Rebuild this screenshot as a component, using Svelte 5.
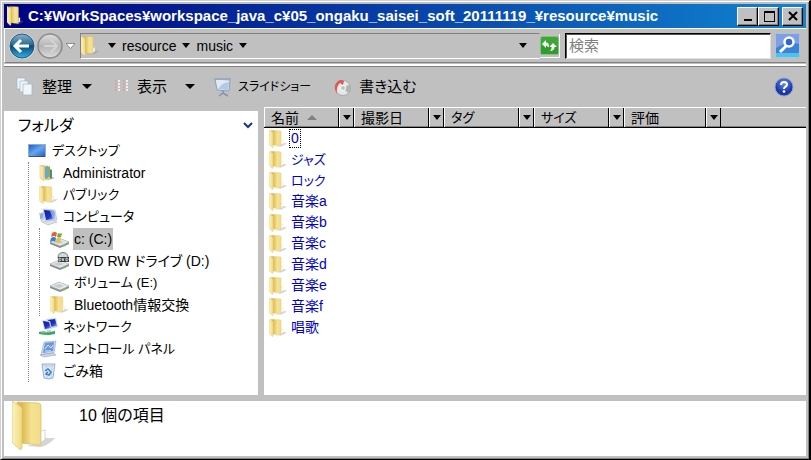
<script lang="ts">
	type Node = { icon: string; label: string; selected?: boolean; children?: Node[] };

	const path = ["resource", "music"];

	const tree: Node[] = [
		{ icon: "user", label: "Administrator" },
		{ icon: "folder", label: "パブリック" },
		{
			icon: "computer",
			label: "コンピュータ",
			children: [
				{ icon: "system", label: "c: (C:)", selected: true },
				{ icon: "dvd", label: "DVD RW ドライブ (D:)" },
				{ icon: "drive", label: "ボリューム (E:)" },
				{ icon: "folder", label: "Bluetooth情報交換" },
			],
		},
		{ icon: "network", label: "ネットワーク" },
		{ icon: "panel", label: "コントロール パネル" },
		{ icon: "trash", label: "ごみ箱" },
	];

	const columns = ["名前", "撮影日", "タグ", "サイズ", "評価"];
	const files = ["0", "ジャズ", "ロック", "音楽a", "音楽b", "音楽c", "音楽d", "音楽e", "音楽f", "唱歌"];

	let search = $state("");
	let focused = $state("0");

	// Katakana is set narrower than kanji
	const isKana = (text: string) => /^[ァ-ー ]+/.test(text);
</script>

{#snippet arrow()}
	<svg class="arrow" width="8" height="5" viewBox="0 0 8 5"><path d="M0 0h8L4 5z" fill="currentColor" /></svg>
{/snippet}

{#snippet folder(w: number, h: number)}
	<svg width={w} height={h} viewBox="0 0 43 50" preserveAspectRatio="none">
		<path d="M14 45 29 46Q37 44 43 37L33 37 29 42z" fill="#888" opacity=".35" />
		<path d="M5 1 26 2Q29 2 29 5V43Q29 44 27 44L8 42z" fill="url(#gold)" stroke="#d9bd62" stroke-width=".7" />
		<path d="M29 30l4-1v10l-4 2z" fill="#fff" stroke="#c9c9b8" stroke-width=".7" />
		<path d="M0 1Q0 0 2 1L9 6Q11 7 10 10V47Q9 50 7 48L1 42Q0 41 0 40z" fill="url(#leaf)" stroke="#dcc36b" stroke-width=".7" />
	</svg>
{/snippet}

{#snippet icon(name: string)}
	{#if name === "folder"}
		{@render folder(18, 18)}
	{:else}
		<svg width="19" height="18" viewBox="0 0 19 18">
			{#if name === "desktop"}
				<path d="M0 2h18v13H0z" fill="#8aaede" />
				<path d="M1 3h16v11H1z" fill="url(#screen)" />
				<path d="M1 14h16v1H1z" fill="#444f66" />
			{:else if name === "user"}
				<path d="M11 16l5-2-3-1z" fill="#bbb" />
				<path d="M2 1l9 1v14H6z" fill="#e7c95c" />
				<path d="M6 3l3-1v12l-3 1z" fill="#68a7cf" />
				<path d="M9 3h2v10H9z" fill="#8aae54" />
				<path d="M1 1l4 2v14l-4-3z" fill="url(#leaf)" stroke="#d0bd73" stroke-width=".5" />
				<path d="M11 5l2 1v8l-2 1z" fill="#55829f" />
			{:else if name === "computer"}
				<path d="M0 5l5-1v8l-3 2z" fill="#c3cfe6" />
				<path d="M1 6l3-1v5l-3 1z" fill="#8fa9da" />
				<path d="M4 1l12 1 2 10-12 1z" fill="#d4dcea" stroke="#a9b5cb" stroke-width=".5" />
				<path d="M5 2l10 1 1 8-9 1z" fill="url(#monitor)" />
				<path d="M11 3l4 0 1 8-2 0z" fill="#b4cdf4" opacity=".7" />
				<path d="M3 14l11-2 4 2-9 3z" fill="#dfe3e8" stroke="#9aa7b8" stroke-width=".5" />
			{:else if name === "network"}
				<path d="M7 1l10-1 2 9-9 2z" fill="#cbd7ea" />
				<path d="M9 2l7-1 2 7-7 1z" fill="url(#monitor)" />
				<path d="M3 2l8 1 2 8-8 1z" fill="#d5deec" />
				<path d="M4 3l6 1 2 6-6 1z" fill="url(#monitor)" />
				<path d="M8 12h4v2H8z" fill="#c6ccd6" />
				<path d="M0 14l5-1q3 2 6 1l5-1v3l-6 1q-5 0-10-1z" fill="#36a860" />
				<path d="M2 14h6" stroke="#a3e0b6" />
			{:else if name === "panel"}
				<path d="M5 2l12-1-2 12-13 2z" fill="#c3d9f5" stroke="#8babcf" stroke-width=".6" />
				<path d="M6 3l9-1-1 9-10 2z" fill="#6c97d9" />
				<path d="M6 9l3-4 3 3 2-3M6 11h6" fill="none" stroke="#dce9fb" />
				<path d="M1 15l13-2 3 2-12 2z" fill="#d2d7df" stroke="#8a97aa" stroke-width=".5" />
			{:else if name === "trash"}
				<path d="M3 2h13l-2 14q-4 2-9 0z" fill="#dbe8f3" stroke="#9ab1c5" />
				<path d="M3 2l4 2h6l3-2M7 4l1 12M13 4l-1 12" fill="none" stroke="#aabfce" stroke-width=".6" />
				<path d="M6 9l3-2 3 3-2 3-3-1 2-2" fill="none" stroke="#3a7ed0" stroke-width="1.5" />
			{:else}
				<path d="M0 12l9-4 10 4v2l-9 4-10-4z" fill="#858b8e" />
				<path d="M0 12l9-4 10 4-9 4z" fill="#e6e9eb" stroke="#a9aeb1" stroke-width=".5" />
				<path d="M3 12l6-2 5 2-5 2z" fill="#c7ccd0" />
				<path d="M13 16l3-1" stroke="#71d04b" stroke-width="1.5" />
				{#if name === "system"}
					<path d="M2 3q3-2 5 0L6 7Q4 5 1 7z" fill="#e65b34" />
					<path d="M8 3q2 1 4 0l-1 4q-2 1-4 0z" fill="#6eae3c" />
					<path d="M1 8q3-2 5 0l-1 4q-2-2-5 0z" fill="#377fc6" />
					<path d="M7 8q2 1 4 0l-1 4q-2 1-4 0z" fill="#efbf2d" />
				{:else if name === "dvd"}
					<ellipse cx="13" cy="5" rx="5" ry="4.5" fill="#d5d8da" stroke="#777" />
					<path d="M8 5h11v5H8z" fill="#3a3d40" />
					<path d="M9 6v3q2 0 2-1.500T9 6M12 6l1 3 1-3M16 6v3q2 0 2-1.500T16 6" fill="none" stroke="#fff" stroke-width=".7" />
				{/if}
			{/if}
		</svg>
	{/if}
{/snippet}

{#snippet branch(nodes: Node[])}
	<ul>
		{#each nodes as node}
			<li>
				<a href="#{node.label}" class="node">
					{@render icon(node.icon)}
					<span class:selected={node.selected} class:kana={isKana(node.label)}>{node.label}</span>
				</a>
				{#if node.children}
					{@render branch(node.children)}
				{/if}
			</li>
		{/each}
	</ul>
{/snippet}

<svg class="defs" width="0" height="0" aria-hidden="true">
	<linearGradient id="gold"><stop offset=".2" stop-color="#dbb94f" /><stop offset=".6" stop-color="#f6e294" /><stop offset="1" stop-color="#f3dc83" /></linearGradient>
	<linearGradient id="leaf"><stop offset="0" stop-color="#fbf3c0" /><stop offset="1" stop-color="#efda80" /></linearGradient>
	<linearGradient id="screen" x2="1" y2="1"><stop offset="0" stop-color="#1f5fc4" /><stop offset=".5" stop-color="#66a5ee" /><stop offset="1" stop-color="#2462c6" /></linearGradient>
	<linearGradient id="monitor" x2="1" y2="1"><stop offset="0" stop-color="#0a19a0" /><stop offset=".6" stop-color="#1c35c8" /><stop offset="1" stop-color="#a6c6f5" /></linearGradient>
	<linearGradient id="back" x2="0" y2="1"><stop offset="0" stop-color="#8cb2ca" /><stop offset=".45" stop-color="#266a96" /><stop offset=".5" stop-color="#0b4675" /><stop offset="1" stop-color="#2bb7e6" /></linearGradient>
	<linearGradient id="forward" x2="0" y2="1"><stop offset="0" stop-color="#dedede" /><stop offset=".5" stop-color="#b4b4b4" /><stop offset="1" stop-color="#dcdcdc" /></linearGradient>
	<radialGradient id="help" cy=".3"><stop offset="0" stop-color="#6a8cf0" /><stop offset="1" stop-color="#1b36a6" /></radialGradient>
</svg>

<div class="window">
	<header class="title">
		{@render folder(17, 20)}
		<h1>C:¥WorkSpaces¥workspace_java_c¥05_ongaku_saisei_soft_20111119_¥resource¥music</h1>
		<div class="controls">
			<button aria-label="最小化"><svg width="14" height="12"><path d="M3 9h8v2H3z" /></svg></button>
			<button aria-label="最大化"><svg width="14" height="12"><path d="M2 1h11v11H2zM3 3v8h9V3z" fill-rule="evenodd" /></svg></button>
			<button aria-label="閉じる" class="close"><svg width="14" height="12"><path d="M3 2l8 8M11 2l-8 8" stroke="#000" stroke-width="2" /></svg></button>
		</div>
	</header>

	<nav class="nav">
		<div class="history">
			<button aria-label="戻る">
				<svg width="28" height="28" viewBox="0 0 28 28">
					<circle cx="14" cy="14" r="13" fill="#d8dde0" />
					<circle cx="14" cy="14" r="12" fill="url(#back)" stroke="#23587b" />
					<path d="M13 8l-6 6 6 6M8 14h13" fill="none" stroke="#fff" stroke-width="3" />
				</svg>
			</button>
			<button aria-label="進む">
				<svg width="28" height="28" viewBox="0 0 28 28">
					<circle cx="14" cy="14" r="12" fill="url(#forward)" stroke="#8b8b8b" stroke-width="1.5" />
					<path d="M15 8l6 6-6 6M20 14H8" fill="none" stroke="#d4d4d4" stroke-width="2" />
				</svg>
			</button>
			<button aria-label="履歴" class="recent">
				<svg width="9" height="6" viewBox="0 0 9 6"><path d="M0 .5h9L4.500 5.500z" fill="#fff" stroke="#777" stroke-width=".8" /></svg>
			</button>
		</div>
		<div class="address">
			{@render folder(18, 20)}
			<span class="crumbs">
				{@render arrow()}
				{#each path as part}
					<a href="#{part}">{part}</a>
					{@render arrow()}
				{/each}
			</span>
			<button class="previous" aria-label="以前の場所">{@render arrow()}</button>
		</div>
		<button class="refresh" aria-label="最新の情報に更新">
			<svg width="19" height="19" viewBox="0 0 19 19">
				<rect x=".5" y=".5" width="18" height="18" rx="2" fill="#3fa638" stroke="#82c47d" />
				<path d="M1 10h17v8H1z" fill="#239021" opacity=".5" />
				<path d="M2 8l4-4v2.500q3 0 3 4l-1 1q0-2-2-2V12z" fill="#fff" />
				<path d="M17 11l-4-4-3.500 4h2.200q0 3-2.200 4 5 0 5-4z" fill="#fff" />
			</svg>
		</button>
		<input type="text" aria-label="検索" placeholder="検索" bind:value={search} />
		<button class="find" aria-label="検索を実行">
			<svg width="25" height="25" viewBox="0 0 25 25">
				<rect x=".5" y=".5" width="24" height="24" rx="2" fill="#3c83d8" stroke="#a9c4e5" />
				<path d="M1 1h23v10q-11-3-23 4z" fill="#7e9fe4" />
				<path d="M1 20h23v4H1z" fill="#49c4ec" />
				<circle cx="14" cy="9" r="4.500" fill="#3563cc" stroke="#fff" stroke-width="2.500" />
				<path d="M11 13l-6 6" stroke="#fff" stroke-width="3" />
			</svg>
		</button>
	</nav>

	<div class="toolbar">
		<button class="organize">
			<svg width="18" height="20" viewBox="0 0 18 20">
				<g fill="#f1f6fb" stroke="#9fb1c4" stroke-width=".7">
					<path d="M1 1h8v11H1z" /><path d="M4 4h8v11H4z" /><path d="M7 7h9v11H7z" />
				</g>
			</svg>
			整理
			<svg class="arrow" width="10" height="5" viewBox="0 0 10 5"><path d="M0 0h10L5 5z" /></svg>
		</button>
		<button class="view">
			<svg width="15" height="16" viewBox="0 0 15 16">
				{#each [1, 4, 7, 10] as y}
					<path d="M1 {y}h2v2H1zM9 {y}h2v2H9z" fill="#dca5a5" />
					<path d="M4 {y}h2v2H4zM12 {y}h2v2h-2z" fill="#eee" />
				{/each}
			</svg>
			表示
			<svg class="arrow" width="10" height="5" viewBox="0 0 10 5"><path d="M0 0h10L5 5z" /></svg>
		</button>
		<button class="slides">
			<svg width="19" height="20" viewBox="0 0 19 20">
				<path d="M2 2l15 1-1 11-12-1z" fill="#dfeaf5" stroke="#8da0b5" />
				<path d="M5 12q5-7 11-7l-1 8z" fill="#b0cae5" />
				<path d="M1 2h17" stroke="#9daaba" stroke-width="2" />
				<path d="M10 14v3M6 19l4-3 5 3" fill="none" stroke="#8493a5" stroke-width="1.500" />
			</svg>
			スライドショー
		</button>
		<button class="burn">
			<svg width="18" height="20" viewBox="0 0 18 20">
				<circle cx="10" cy="11" r="7.500" fill="#e7e7e7" stroke="#aaa" />
				<path d="M10 11l7-4q2 5-2 9z" fill="#a9b7ad" />
				<circle cx="10" cy="11" r="2.500" fill="#c0c0c0" stroke="#fff" />
				<path d="M4 17Q-1 9 5 4q3-2 6 0l-1 4-3-2Q3 9 4 17z" fill="#dd5a53" />
			</svg>
			書き込む
		</button>
		<button class="help" aria-label="ヘルプ">
			<svg width="20" height="20" viewBox="0 0 20 20">
				<circle cx="10" cy="10" r="9" fill="url(#help)" stroke="#8e9fc9" />
				<path d="M7 8q0-3 3-3t3 2.500q0 1.500-2 2.500-1 .7-1 2" fill="none" stroke="#fff" stroke-width="2" />
				<circle cx="10" cy="14.500" r="1.300" fill="#fff" />
			</svg>
		</button>
	</div>

	<main>
		<aside>
			<h2>
				フォルダ
				<svg width="10" height="7" viewBox="0 0 10 7"><path d="M1 1l4 4 4-4" fill="none" stroke="#14387f" stroke-width="2" /></svg>
			</h2>
			<div class="tree">
				<a href="#desktop" class="node">{@render icon("desktop")}<span class="kana">デスクトップ</span></a>
				{@render branch(tree)}
			</div>
		</aside>
		<section class="list">
			<table>
				<thead>
					<tr>
						{#each columns as column, i}
							<th>
								<div class="head">
									<button class="sort" class:kana={isKana(column)}>
										{column}
										{#if i === 0}
											<svg width="10" height="5" viewBox="0 0 10 5"><path d="M0 5h10L5 0z" fill="#808080" /></svg>
										{/if}
									</button>
									<button class="filter" aria-label="{column}の絞り込み">{@render arrow()}</button>
								</div>
							</th>
						{/each}
						<th class="rest"><div class="head"></div></th>
					</tr>
				</thead>
				<tbody>
					{#each files as file}
						<tr>
							<td colspan="6">
								<button class="file" onclick={() => (focused = file)}>
									{@render folder(18, 18)}
									<span class:focused={focused === file} class:kana={isKana(file)}>{file}</span>
								</button>
							</td>
						</tr>
					{/each}
				</tbody>
			</table>
		</section>
	</main>

	<footer>
		{@render folder(43, 50)}
		<p>{files.length} 個の項目</p>
	</footer>
</div>

<style>
	:global(body) {
		margin: 0;
	}
	.defs {
		position: absolute;
	}
	.window {
		box-sizing: border-box;
		min-height: 100vh;
		display: flex;
		flex-direction: column;
		padding: 3px;
		background: #c0c0c0;
		border: 1px solid #d0d0d0;
		border-right: 2px solid #000;
		border-bottom-color: #000;
		box-shadow: inset 1px 1px #fff, inset -1px -1px #808080;
		font: 14px/20px "Liberation Sans", "Noto Sans CJK JP", sans-serif;
		font-feature-settings: "palt";
		color: #000;
	}
	svg {
		display: block;
		flex: none;
	}
	button {
		display: flex;
		align-items: center;
		margin: 0;
		padding: 0;
		border: 0;
		background: none;
		color: inherit;
		font: inherit;
		font-feature-settings: inherit;
		white-space: nowrap;
	}
	a {
		color: inherit;
		text-decoration: none;
	}

	/* Title bar */
	.title {
		display: flex;
		align-items: center;
		gap: 4px;
		height: 24px;
		padding: 0 3px;
		background: linear-gradient(90deg, #000080, #1084d0);
		color: #fff;
	}
	h1 {
		flex: 1;
		min-width: 0;
		margin: 0;
		overflow: hidden;
		font-size: 15px;
		line-height: 20px;
		white-space: nowrap;
	}
	.controls {
		display: flex;
	}
	.controls button {
		justify-content: center;
		width: 21px;
		height: 19px;
		background: #c0c0c0;
		border: 1px solid;
		border-color: #fff #000 #000 #fff;
		box-shadow: inset -1px -1px #808080;
	}
	.controls .close {
		margin-left: 3px;
	}

	/* Navigation */
	.nav {
		display: flex;
		align-items: center;
		height: 33px;
		padding: 0 6px 0 3px;
		border-top: 1px solid #fff;
		border-left: 1px solid #fff;
		border-bottom: 1px solid #808080;
	}
	.history {
		display: flex;
		align-items: center;
		width: 72px;
	}
	.recent {
		padding-left: 2px;
	}
	.address {
		flex: 1;
		display: flex;
		align-items: center;
		gap: 9px;
		height: 24px;
		border: 1px solid;
		border-color: #808080 #c0c0c0 #fff #808080;
	}
	.crumbs {
		display: flex;
		align-items: center;
		gap: 6px;
	}
	.previous {
		margin-left: auto;
		padding: 8px 12px;
	}
	.refresh {
		width: 20px;
		height: 24px;
		border-bottom: 1px solid #fff;
		border-right: 1px solid #fff;
	}
	.nav input {
		box-sizing: border-box;
		width: 206px;
		height: 26px;
		margin: 0 4px 0 5px;
		padding: 0 3px;
		border: 1px solid;
		border-color: #000 #e0e0e0 #e0e0e0 #000;
		border-radius: 0;
		background: #fff;
		box-shadow: inset 1px 1px #555;
		font: inherit;
		font-size: 15px;
		outline: 0;
	}
	.nav input::placeholder {
		color: #808080;
	}

	/* Toolbar */
	.toolbar {
		display: flex;
		align-items: center;
		height: 37px;
		margin-top: 1px;
		padding: 2px 12px 0;
		border-top: 2px solid #fff;
		box-shadow: inset 0 1px #808080;
		font-size: 15px;
	}
	.toolbar button {
		gap: 8px;
	}
	.organize .arrow {
		margin-left: 2px;
	}
	.view {
		margin-left: 22px;
	}
	.view .arrow {
		margin-left: 10px;
	}
	.slides {
		margin-left: 18px;
	}
	.toolbar .slides {
		gap: 6px;
		font-size: 12px;
	}
	.burn {
		margin-left: 22px;
	}
	.toolbar .help {
		margin-left: auto;
	}

	/* Folder tree and file list */
	main {
		flex: 1;
		display: grid;
		grid-template-columns: 254px 1fr;
		gap: 6px;
		margin: 2px 0 6px;
	}
	aside {
		margin-top: 4px;
		background: #fff;
	}
	h2 {
		display: flex;
		align-items: center;
		justify-content: space-between;
		height: 29px;
		margin: 0;
		padding: 0 5px 0 14px;
		font-size: 16px;
		font-weight: 400;
	}
	.tree {
		padding-left: 24px;
	}
	.tree ul {
		margin: 0;
		padding: 0 0 0 10px;
		border-left: 1px dotted #808080;
		list-style: none;
	}
	.node {
		display: flex;
		align-items: center;
		gap: 5px;
		height: 22px;
	}
	.tree svg {
		width: 19px;
	}
	.selected {
		background: #c0c0c0;
		outline: 1px solid #c0c0c0;
	}
	.list {
		background: #fff;
	}
	table {
		width: 100%;
		table-layout: fixed;
		border-spacing: 0;
	}
	th,
	td {
		padding: 0;
		font-weight: 400;
	}
	th {
		width: 90px;
	}
	th:nth-child(5) {
		width: 97px;
	}
	th.rest {
		width: auto;
	}
	.head {
		display: flex;
		box-sizing: border-box;
		height: 21px;
		background: #c0c0c0;
		border-top: 1px solid #fff;
		border-bottom: 1px solid #000;
		box-shadow: inset 0 -1px #808080;
	}
	.sort,
	.filter {
		border-left: 1px solid #fff;
		border-right: 1px solid #000;
	}
	.sort {
		flex: 1;
		gap: 8px;
		padding-left: 6px;
	}
	.filter {
		box-sizing: border-box;
		justify-content: center;
		width: 15px;
	}
	.file {
		gap: 2px;
		height: 21px;
		padding-left: 5px;
		color: #0000c8;
	}
	.file span {
		padding: 0 2px;
		line-height: 19px;
	}
	.focused {
		outline: 1px dotted #000;
		outline-offset: -1px;
	}
	.kana {
		font-size: 13px;
	}

	/* Details */
	footer {
		display: flex;
		gap: 24px;
		height: 55px;
		padding-left: 8px;
		background: #fff;
	}
	footer p {
		margin: 5px 0;
		font-size: 16px;
	}
</style>
